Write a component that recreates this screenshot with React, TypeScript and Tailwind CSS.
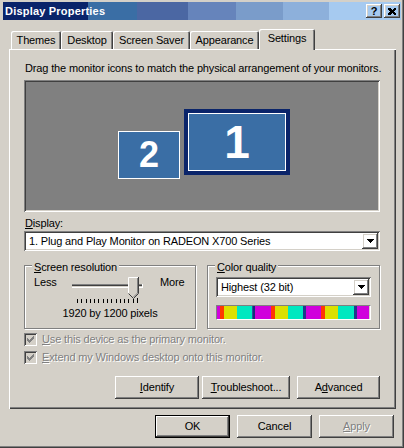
const raised =
  'shadow-[inset_-1px_-1px_#404040,inset_1px_1px_#ffffff,inset_-2px_-2px_#808080,inset_2px_2px_#d4d0c8]';
const sunken =
  'shadow-[inset_1px_1px_#808080,inset_-1px_-1px_#ffffff,inset_2px_2px_#404040,inset_-2px_-2px_#d4d0c8]';
const disabledText = 'text-[#808080] [text-shadow:1px_1px_0_#ffffff]';

const tabs = [
  { label: 'Themes', w: 'w-[50px]' },
  { label: 'Desktop', w: 'w-[52px]' },
  { label: 'Screen Saver', w: 'w-[77px]' },
  { label: 'Appearance', w: 'w-[69px]' },
];

const colorBar = [
  'w-[3px] bg-[#d000dc]', 'w-[4px] bg-[#ff3800]', 'w-[13px] bg-[#dce000]', 'w-[15px] bg-[#00e8c0]',
  'w-[1px] bg-[#2a4f9c]', 'w-[2px] bg-[#142e7c]', 'w-[16px] bg-[#d000dc]', 'w-[4px] bg-[#ff3800]',
  'w-[13px] bg-[#dce000]', 'w-[15px] bg-[#00e8c0]', 'w-[3px] bg-[#1c3a8c]', 'w-[15px] bg-[#d000dc]',
  'w-[4px] bg-[#ff3800]', 'w-[13px] bg-[#dce000]', 'w-[16px] bg-[#00e8c0]', 'w-[3px] bg-[#1c3a8c]',
  'w-[12px] bg-[#d000dc]',
];

function DropButton() {
  return (
    <div className={`flex h-[16px] w-[16px] items-center justify-center ${raised}`}>
      <svg width="7" height="4" shapeRendering="crispEdges">
        <path d="M0 0h7v1h-1v1h-1v1h-1v1h-1v-1h-1v-1h-1v-1h-1z" fill="#000" />
      </svg>
    </div>
  );
}

function Select({ text, className = '' }: { text: string; className?: string }) {
  return (
    <div className={`flex h-[20px] items-center bg-white pl-[5px] pr-[2px] ${sunken} ${className}`}>
      <span className="flex-1 whitespace-nowrap">{text}</span>
      <DropButton />
    </div>
  );
}

function Button({ children, className = '', isDefault = false }: { children: React.ReactNode; className?: string; isDefault?: boolean }) {
  if (isDefault) {
    return (
      <div className={`border border-black ${className}`}>
        <div className={`flex h-full items-center justify-center ${raised}`}>{children}</div>
      </div>
    );
  }
  return <div className={`flex items-center justify-center ${raised} ${className}`}>{children}</div>;
}

function CheckBox({ mnemonic, rest }: { mnemonic: string; rest: string }) {
  return (
    <div className="flex h-[13px] items-center">
      <div className={`flex h-[13px] w-[13px] items-center justify-center bg-[#d4d0c8] ${sunken}`}>
        <svg width="7" height="7" shapeRendering="crispEdges" fill="#808080">
          <rect x="6" y="0" width="1" height="3" />
          <rect x="5" y="1" width="1" height="3" />
          <rect x="4" y="2" width="1" height="3" />
          <rect x="3" y="3" width="1" height="3" />
          <rect x="2" y="4" width="1" height="3" />
          <rect x="1" y="3" width="1" height="3" />
          <rect x="0" y="2" width="1" height="3" />
        </svg>
      </div>
      <span className={`ml-[5px] whitespace-nowrap ${disabledText}`}>
        <span className="underline">{mnemonic}</span>
        {rest}
      </span>
    </div>
  );
}

function Slider() {
  const ticks = Array.from({ length: 15 }, (_, i) => Math.round(5 + (i * 60) / 14));
  return (
    <svg width="72" height="28" shapeRendering="crispEdges" className="mt-[1px] block">
      <rect x="0" y="7" width="70" height="1" fill="#808080" />
      <rect x="0" y="8" width="70" height="1" fill="#404040" />
      <rect x="0" y="9" width="70" height="1" fill="#d4d0c8" />
      <rect x="0" y="10" width="71" height="1" fill="#ffffff" />
      <rect x="70" y="7" width="1" height="4" fill="#ffffff" />
      {ticks.map((x, i) => (
        <rect key={i} x={x} y={i === 14 ? 21 : 22} width="1" height={i === 14 ? 5 : 4} fill="#000" />
      ))}
      <polygon points="56,0 66,0 66,16 61,21 56,16" fill="#d4d0c8" />
      <path d="M56.5 16.5V0.5H66" stroke="#ffffff" fill="none" shapeRendering="auto" />
      <path d="M66.5 0V16.5L61.5 21.5L56.5 16.5" stroke="#404040" fill="none" shapeRendering="auto" />
      <path d="M65.5 1V16L61.5 20" stroke="#808080" fill="none" shapeRendering="auto" />
    </svg>
  );
}

function GroupBox({ title, mnemonic, className = '', children }: { title: string; mnemonic: string; className?: string; children: React.ReactNode }) {
  return (
    <div className={`relative h-[64px] border border-[#808080] shadow-[inset_1px_1px_#ffffff,1px_1px_#ffffff] ${className}`}>
      <span className="absolute left-[7px] top-[-5px] bg-[#d4d0c8] px-[2px] whitespace-nowrap">
        <span className="underline">{mnemonic}</span>
        {title}
      </span>
      {children}
    </div>
  );
}

export default function App() {
  return (
    <div className="flex h-[448px] w-[404px] flex-col bg-[#d4d0c8] px-[3px] pt-[2px] font-['Liberation_Sans',Arial,sans-serif] text-[11px] leading-[13px] tracking-[-0.15px] text-black shadow-[inset_-1px_-1px_#404040,inset_-2px_-2px_#808080]">
      {/* title bar */}
      <div className="flex h-[18px] items-center justify-between bg-[linear-gradient(to_right,#0a246a_0px_85px,#3a6ea5_85px_134px,#4b67a3_134px_185px,#6684bb_185px_233px,#7a9cca_233px_280px,#8db0db_280px_326px,#a6caf0_326px)] pl-[2px] pr-[1px]">
        <span className="text-[11px] font-bold tracking-[0.2px] text-white">Display Properties</span>
        <div className="flex gap-[2px]">
          <div className={`flex h-[14px] w-[16px] items-center justify-center text-[11px] font-bold leading-none ${raised}`}>?</div>
          <div className={`flex h-[14px] w-[16px] items-center justify-center ${raised}`}>
            <svg width="8" height="7" shapeRendering="crispEdges">
              <path d="M0 0h2l2 2 2-2h2v1l-2 2.5 2 2.5v1h-2l-2-2-2 2h-2v-1l2-2.5-2-2.5z" fill="#000" />
            </svg>
          </div>
        </div>
      </div>

      {/* tabs */}
      <div className="mt-[9px] flex h-[21px] items-end pl-[8px]">
        {tabs.map((t) => (
          <div
            key={t.label}
            className={`mb-[1px] flex h-[18px] items-center justify-center rounded-t-[2px] pt-[1px] shadow-[inset_1px_1px_#ffffff,inset_-1px_0_#404040,inset_-2px_0_#808080] ${t.w}`}
          >
            {t.label}
          </div>
        ))}
        <div className="relative z-10 flex h-[21px] w-[56px] items-center justify-center rounded-t-[2px] bg-[#d4d0c8] pb-[3px] shadow-[inset_1px_1px_#ffffff,inset_-1px_0_#404040,inset_-2px_0_#808080]">
          Settings
        </div>
      </div>

      {/* tab panel */}
      <div className="-mt-[1px] ml-[6px] flex h-[360px] w-[387px] flex-col px-[15px] pt-[13px] shadow-[inset_1px_1px_#ffffff,inset_-1px_-1px_#404040,inset_-2px_-2px_#808080]">
        <p className="pl-[1px] whitespace-nowrap">Drag the monitor icons to match the physical arrangement of your monitors.</p>

        <div className={`relative mt-[5px] h-[132px] w-[356px] bg-[#808080] ${sunken}`}>
          <div className="absolute left-[94px] top-[51px] flex h-[48px] w-[62px] items-center justify-center border border-white bg-[#3a6ea5] text-[36px] font-bold leading-none tracking-normal text-white">
            2
          </div>
          <div className="absolute left-[160px] top-[29px] h-[66px] w-[106px] border-[4px] border-[#0a246a]">
            <div className="flex h-full items-center justify-center border border-white bg-[#3a6ea5] text-[46px] font-bold leading-none tracking-normal text-white">
              1
            </div>
          </div>
        </div>

        <div className="mt-[5px] pl-[1px]">
          <span className="underline">D</span>isplay:
        </div>
        <Select className="mt-[1px] w-[356px]" text="1. Plug and Play Monitor on RADEON X700 Series" />

        <div className="mt-[14px] flex gap-[11px]">
          <GroupBox title="creen resolution" mnemonic="S" className="w-[172px]">
            <div className="flex items-start pl-[9px] pt-[10px]">
              <span className="w-[38px]">Less</span>
              <Slider />
              <span className="ml-[16px]">More</span>
            </div>
            <div className="mt-[2px] text-center">1920 by 1200 pixels</div>
          </GroupBox>
          <GroupBox title="olor quality" mnemonic="C" className="w-[173px]">
            <div className="px-[8px] pt-[11px]">
              <Select text="Highest (32 bit)" />
              <div className="mt-[8px] flex h-[15px] overflow-hidden border-t border-l border-[#808080] border-b-white border-r-white border-b border-r">
                {colorBar.map((c, i) => (
                  <div key={i} className={`h-full shrink-0 ${c}`} />
                ))}
              </div>
            </div>
          </GroupBox>
        </div>

        <div className="mt-[4px] flex flex-col gap-[5px]">
          <CheckBox mnemonic="U" rest="se this device as the primary monitor." />
          <CheckBox mnemonic="E" rest="xtend my Windows desktop onto this monitor." />
        </div>

        <div className="mt-[12px] flex">
          <Button className="ml-[91px] h-[23px] w-[84px]">
            <span><span className="underline">I</span>dentify</span>
          </Button>
          <Button className="ml-[3px] h-[23px] w-[88px]">
            <span><span className="underline">T</span>roubleshoot...</span>
          </Button>
          <Button className="ml-[7px] h-[23px] w-[83px]">
            <span>A<span className="underline">d</span>vanced</span>
          </Button>
        </div>
      </div>

      {/* dialog buttons */}
      <div className="mt-[6px] flex justify-end gap-[7px] pr-[7px]">
        <Button isDefault className="h-[23px] w-[75px]">OK</Button>
        <Button className="h-[23px] w-[75px]">Cancel</Button>
        <Button className="h-[23px] w-[75px]">
          <span className={disabledText}><span className="underline">A</span>pply</span>
        </Button>
      </div>
    </div>
  );
}
